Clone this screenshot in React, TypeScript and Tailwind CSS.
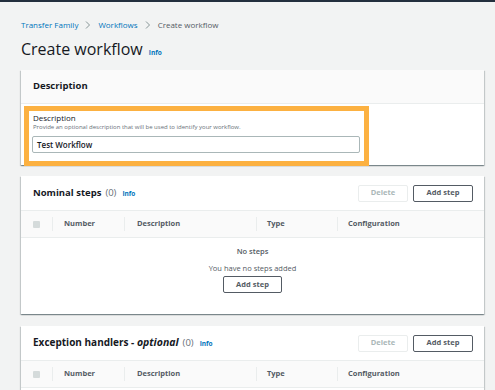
import React from "react";

const font = { fontFamily: '"Open Sans", "Noto Sans", Arial, sans-serif' };

function Btn({ children, disabled }: { children: React.ReactNode; disabled?: boolean }) {
  return (
    <div
      className={
        "flex items-center justify-center h-[17px] rounded-[2px] border text-[7.5px] font-bold " +
        (disabled ? "border-[#eaeded] text-[#aab7b8] bg-white" : "border-[#545b64] text-[#545b64] bg-white")
      }
    >
      {children}
    </div>
  );
}

function TableHead() {
  const Div = () => <div className="w-px h-[14px] bg-[#eaeded]" />;
  return (
    <div className="flex items-center h-[27px] bg-[#fafafa] border-b border-[#eaeded] text-[7.5px] font-bold text-[#545b64]">
      <div className="w-[31px] flex items-center justify-end pr-[12px] h-full">
        <div className="w-[7px] h-[7px] bg-[#d5dbdb] rounded-[1px]" />
      </div>
      <Div />
      <div className="w-[71px] pl-[11px]">Number</div>
      <Div />
      <div className="w-[131px] pl-[12px]">Description</div>
      <Div />
      <div className="w-[80px] pl-[10px]">Type</div>
      <Div />
      <div className="flex-1 pl-[10px]">Configuration</div>
    </div>
  );
}

function StepsHeader({ title }: { title: React.ReactNode }) {
  return (
    <div className="flex items-center h-[35px] pl-[12px] pr-[11px] border-b border-[#eaeded]">
      <div className="flex items-baseline text-[9.5px] font-bold text-[#16191f]">
        {title}
        <span className="ml-[4px] font-normal text-[#687078]">(0)</span>
        <span className="ml-[6px] text-[6.5px] font-bold text-[#0073bb]">Info</span>
      </div>
      <div className="flex-1" />
      <div className="w-[50px]">
        <Btn disabled>Delete</Btn>
      </div>
      <div className="w-[60px] ml-[5px]">
        <Btn>Add step</Btn>
      </div>
    </div>
  );
}

const cardShadow =
  "shadow-[0_1px_1px_0_rgba(0,28,36,0.3),1px_1px_1px_0_rgba(0,28,36,0.15),-1px_1px_1px_0_rgba(0,28,36,0.15)]";

export default function App() {
  return (
    <div style={font} className="w-[495px] h-[390px] overflow-hidden bg-[#f2f3f3]">
      <div className="h-[2px] bg-[#232f3e]" />
      <div className="pl-[21px] pr-[11px]">
        <div className="flex items-center h-[12px] mt-[17px] text-[8px] text-[#545b64]">
          <span className="text-[#0073bb]">Transfer Family</span>
          <span className="mx-[7px] text-[#879596]">
            <svg width="6" height="8" viewBox="0 0 6 8">
              <path d="M1 0.5 L4.5 4 L1 7.5" fill="none" stroke="#879596" strokeWidth="1" />
            </svg>
          </span>
          <span className="text-[#0073bb]">Workflows</span>
          <span className="mx-[7px]">
            <svg width="6" height="8" viewBox="0 0 6 8">
              <path d="M1 0.5 L4.5 4 L1 7.5" fill="none" stroke="#879596" strokeWidth="1" />
            </svg>
          </span>
          <span>Create workflow</span>
        </div>
        <div className="flex items-baseline h-[22px] mt-[7px]">
          <span className="text-[16px] leading-[22px] text-[#16191f]">Create workflow</span>
          <span className="ml-[6px] text-[6.5px] font-bold text-[#0073bb]">Info</span>
        </div>

        {/* Description card */}
        <div className={"mt-[10px] bg-white " + cardShadow}>
          <div className="flex items-center h-[34px] pl-[12px] bg-[#fafafa] border-b border-[#eaeded] text-[9.5px] font-bold text-[#16191f]">
            Description
          </div>
          <div className="h-[61px] pt-[2px] pl-[3px]">
            <div className="w-[345px] h-[60px] border-[5px] border-[#fcb141] bg-white pl-[3px] pt-[1px]">
              <div className="text-[8px] leading-[11px] text-[#16191f] pl-[1px]">Description</div>
              <div className="text-[6px] leading-[9px] text-[#687078] pl-[1px]">
                Provide an optional description that will be used to identify your workflow.
              </div>
              <div className="mt-[4px] w-[328px] h-[17px] border border-[#aab7b8] rounded-[2px] flex items-center pl-[4px] text-[8px] font-semibold text-[#16191f]">
                Test Workflow
              </div>
            </div>
          </div>
        </div>

        {/* Nominal steps */}
        <div className={"mt-[11px] bg-white " + cardShadow}>
          <StepsHeader title={<span>Nominal steps</span>} />
          <TableHead />
          <div className="h-[76px] flex flex-col items-center">
            <div className="mt-[7px] text-[7.5px] leading-[12px] font-semibold text-[#545b64]">No steps</div>
            <div className="mt-[5px] text-[7.5px] leading-[12px] text-[#545b64]">You have no steps added</div>
            <div className="mt-[2px] w-[59px]">
              <Btn>Add step</Btn>
            </div>
          </div>
        </div>

        {/* Exception handlers */}
        <div className={"mt-[12px] bg-white " + cardShadow}>
          <StepsHeader
            title={
              <span className="text-[10px]">
                Exception handlers - <i className="text-[10.5px]">optional</i>
              </span>
            }
          />
          <TableHead />
          <div className="h-[40px]" />
        </div>
      </div>
    </div>
  );
}
